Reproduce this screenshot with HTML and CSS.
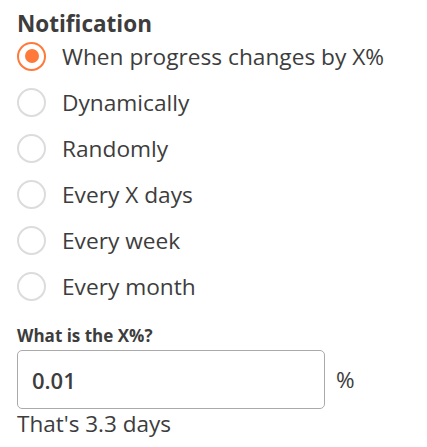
FILE: index.html
```html
<!DOCTYPE html>
<html lang="en">
<head>
    <meta charset="UTF-8">
    <meta name="viewport" content="width=device-width, initial-scale=1.0">
    <title>Notification</title>
    <link rel="stylesheet" href="styles.css">
</head>
<body>
    <div class="container">
        <div class="title">Notification</div>
        <div class="options">
            <label class="option"><span class="radio checked"></span>When progress changes by X%</label>
            <label class="option"><span class="radio"></span>Dynamically</label>
            <label class="option"><span class="radio"></span>Randomly</label>
            <label class="option"><span class="radio"></span>Every X days</label>
            <label class="option"><span class="radio"></span>Every week</label>
            <label class="option"><span class="radio"></span>Every month</label>
        </div>
        <div class="field-label">What is the X%?</div>
        <div class="field">
            <div class="input">0.01</div>
            <span class="unit">%</span>
        </div>
        <div class="hint">That's 3.3 days</div>
    </div>
</body>
</html>
```

FILE: styles.css
```css
body {
    font-family: "Open Sans", sans-serif;
    margin: 0;
    background-color: #fff;
    color: #3d3d3d;
}
.container {
    padding: 9px 17px 0;
}
.title {
    font-size: 22.5px;
    font-weight: bold;
    line-height: 30px;
}
.options {
    display: flex;
    flex-direction: column;
    margin-top: -6px;
}
.option {
    display: flex;
    align-items: center;
    height: 46px;
    font-size: 22.7px;
}
.radio {
    width: 25px;
    height: 25px;
    border: 2px solid #dcdcdc;
    border-radius: 50%;
    margin-right: 16px;
    box-sizing: content-box;
    display: flex;
    align-items: center;
    justify-content: center;
}
.radio.checked {
    border-color: #ff7a3a;
}
.radio.checked::after {
    content: "";
    width: 14px;
    height: 14px;
    border-radius: 50%;
    background-color: #ff7a3a;
}
.field-label {
    font-size: 17px;
    font-weight: bold;
    margin-top: 17px;
    line-height: 20px;
}
.field {
    display: flex;
    align-items: center;
    margin-top: 4px;
}
.input {
    box-sizing: border-box;
    width: 308px;
    height: 59px;
    border: 1px solid #aaa;
    border-radius: 5px;
    padding: 0 14px;
    font-size: 22px;
    font-weight: 600;
    display: flex;
    align-items: center;
}
.unit {
    font-size: 22.5px;
    margin-left: 11px;
}
.hint {
    font-size: 22.5px;
    line-height: 30px;
}
```
